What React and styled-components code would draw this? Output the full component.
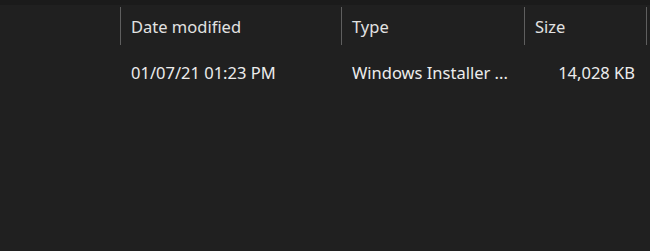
import React from 'react';
import styled, { createGlobalStyle } from 'styled-components';

const GlobalStyle = createGlobalStyle`
  html, body {
    margin: 0;
    padding: 0;
    background: #202020;
  }
  body {
    font-family: "Noto Sans", "Open Sans", sans-serif;
  }
`;

const columns = [
    { key: 'name', title: '', width: 121 },
    { key: 'date', title: 'Date modified', width: 221 },
    { key: 'type', title: 'Type', width: 183 },
    { key: 'size', title: 'Size', width: 122, right: true },
];

const files = [
    { name: '', date: '01/07/21 01:23 PM', type: 'Windows Installer ...', size: '14,028 KB' },
];

const Pane = styled.div`
    width: 650px;
    height: 251px;
    background: #202020;
    overflow: hidden;
`;

const TopStrip = styled.div`
    height: 5px;
    background: #1b1b1b;
`;

const HeaderRow = styled.div`
    display: flex;
    height: 43px;
`;

const HeaderCell = styled.div`
    flex: 0 0 ${p => p.$width}px;
    display: flex;
    align-items: center;
    box-sizing: border-box;
    padding-left: 10px;
    font-size: 16.5px;
    color: #e2e2e2;
    border-right: 1px solid #5f5f5f;
    margin-top: 2px;
    height: 38px;
    white-space: nowrap;
`;

const Row = styled.div`
    display: flex;
    height: 48px;
    align-items: center;
`;

const Cell = styled.div`
    flex: 0 0 ${p => p.$width}px;
    box-sizing: border-box;
    padding: ${p => (p.$right ? '0 12px 0 0' : '0 0 0 10px')};
    text-align: ${p => (p.$right ? 'right' : 'left')};
    font-size: 16.5px;
    color: #ececec;
    white-space: nowrap;
    overflow: hidden;
`;

export default function App() {
    return (
        <>
            <GlobalStyle />
            <Pane>
                <TopStrip />
                <HeaderRow>
                    {columns.map(c => (
                        <HeaderCell key={c.key} $width={c.width}>
                            {c.title}
                        </HeaderCell>
                    ))}
                </HeaderRow>
                {files.map((f, i) => (
                    <Row key={i}>
                        {columns.map(c => (
                            <Cell key={c.key} $width={c.width} $right={c.right}>
                                {f[c.key]}
                            </Cell>
                        ))}
                    </Row>
                ))}
            </Pane>
        </>
    );
}
